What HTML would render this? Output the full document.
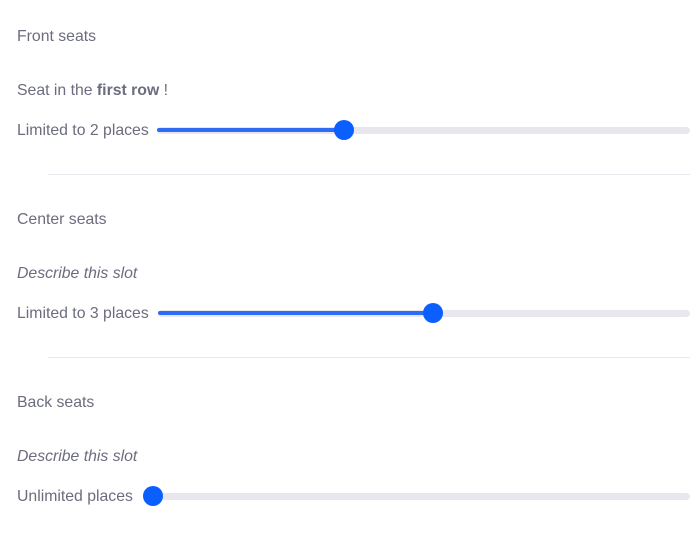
<!DOCTYPE html>
<html><head><style>
body{margin:0;width:690px;height:537px;background:#fff;font-family:"Liberation Sans",sans-serif;font-size:15.8px;color:#6b6c7e;position:relative;overflow:hidden}
.t{position:absolute;left:17px;line-height:20px;white-space:nowrap}
.track{position:absolute;height:7px;background:#e7e7ed;border-radius:4px;right:0}
.fill{position:absolute;height:4px;background:#2e6cf6;border-radius:2px}
.th{position:absolute;width:20px;height:20px;border-radius:50%;background:#0b5fff}
.hr{position:absolute;left:48px;right:0;height:1px;background:#e7e7ed}
</style></head><body>
<div class="t" style="top:27px">Front seats</div>
<div class="t" style="top:81px">Seat in the <b>first row</b> !</div>
<div class="t" style="top:121px">Limited to 2 places</div>
<div class="track" style="left:157px;top:127px"></div>
<div class="fill" style="left:157px;width:187px;top:128px"></div>
<div class="th" style="left:334px;top:120px"></div>
<div class="hr" style="top:174px"></div>

<div class="t" style="top:210px">Center seats</div>
<div class="t" style="top:264px"><i>Describe this slot</i></div>
<div class="t" style="top:304px">Limited to 3 places</div>
<div class="track" style="left:158px;top:310px"></div>
<div class="fill" style="left:158px;width:275px;top:311px"></div>
<div class="th" style="left:423px;top:303px"></div>
<div class="hr" style="top:357px"></div>

<div class="t" style="top:393px">Back seats</div>
<div class="t" style="top:447px"><i>Describe this slot</i></div>
<div class="t" style="top:487px">Unlimited places</div>
<div class="track" style="left:150px;top:493px"></div>
<div class="th" style="left:143px;top:486px"></div>
</body></html>
